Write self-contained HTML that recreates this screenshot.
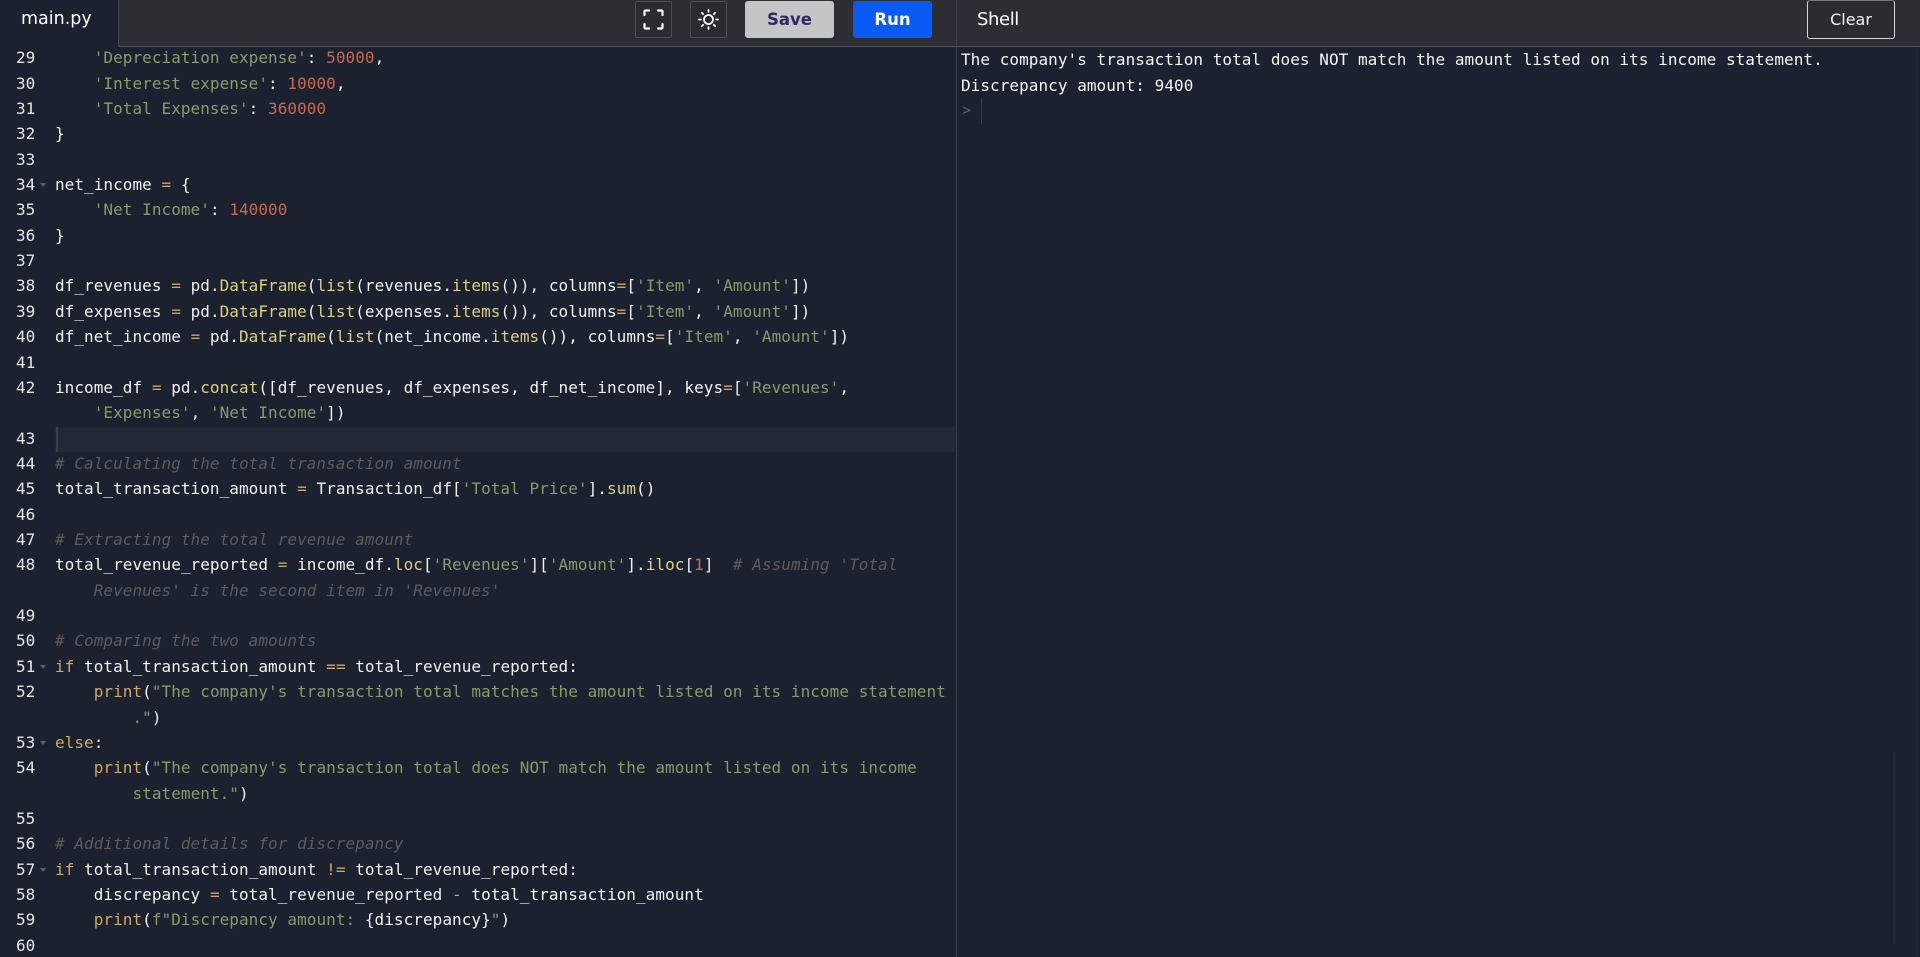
<!DOCTYPE html>
<html><head><meta charset="utf-8"><title>main.py</title>
<style>
html,body{margin:0;padding:0;background:#1b212e;width:1920px;height:957px;overflow:hidden}
*{box-sizing:border-box}
#root{position:absolute;left:0;top:0;width:1920px;height:957px;overflow:hidden;background:#1b212e}
#code{position:absolute;left:0;top:45.2px;width:955px;font:16px/25.36px "DejaVu Sans Mono","Liberation Mono",monospace;letter-spacing:.05px;color:#f2f2f2}
.r{position:relative;height:25.36px;padding-left:55px;white-space:pre}
.n{position:absolute;left:16px;top:0;font-style:normal;color:#e6e6e6;letter-spacing:0}
.fd:after{content:"";position:absolute;left:40px;top:11px;border:3px solid transparent;border-top:4px solid #5a6068;border-bottom:0}
.s{color:#8a9a6c}.d{color:#c9684e}.o{color:#cda869}.k{color:#cda869}.f{color:#dad085}.c{color:#5f5a60;font-style:italic}
#active{position:absolute;left:55px;top:426.500px;width:900px;height:25px;background:#222835}
#cur{position:absolute;left:56px;top:426.500px;width:2px;height:25px;background:#3a414e}
#hdr{position:absolute;left:0;top:0;width:1920px;height:47px;background:#2c2e33;border-bottom:1px solid #55585c}
#tab{position:absolute;left:0;top:0;width:118.5px;height:47px;background:#1b212e;border-right:1px solid #44474c;border-bottom:1px solid #1b212e;color:#fff;font:17.5px/39px "DejaVu Sans",sans-serif;padding-left:21px}
.ib{position:absolute;top:1px;width:37px;height:37px;border:1px solid #4b4e53;border-radius:2px;background:#2a2c30}
.btn{position:absolute;top:1px;height:37px;border-radius:3px;text-align:center;font:bold 16.5px/37px "DejaVu Sans",sans-serif}
#split{position:absolute;left:955.5px;top:0;width:1px;height:957px;background:#3d434e}
#shell{position:absolute;left:977px;top:0;color:#fff;font:18px/39px "DejaVu Sans",sans-serif;letter-spacing:-.4px}
#clear{position:absolute;left:1807px;top:0;width:88px;height:39px;border:1px solid #d8d8d8;border-top-color:#777;border-radius:3px;color:#f0f0f0;text-align:center;font:16px/38px "DejaVu Sans",sans-serif;background:#2a2c30}
#out{position:absolute;left:961px;top:47.2px;font:16px/25.36px "DejaVu Sans Mono","Liberation Mono",monospace;color:#f5f5f5;white-space:pre;letter-spacing:.05px}
#pr{position:absolute;left:962px;top:98px;font:15px/25px "DejaVu Sans Mono",monospace;color:#59606b}
#pl{position:absolute;left:981px;top:98px;width:1px;height:26px;background:#343a46}
#sb{position:absolute;left:1893px;top:752px;width:3px;height:192px;background:#222835}
#sb2{position:absolute;left:1916px;top:47px;width:2px;height:910px;background:#20262f}
</style></head><body>
<div id="root">
<div id="active"></div><div id="cur"></div>
<div id="code">
<div class="r"><i class="n">29</i>    <span class="s">'Depreciation expense'</span>: <span class="d">50000</span>,</div>
<div class="r"><i class="n">30</i>    <span class="s">'Interest expense'</span>: <span class="d">10000</span>,</div>
<div class="r"><i class="n">31</i>    <span class="s">'Total Expenses'</span>: <span class="d">360000</span></div>
<div class="r"><i class="n">32</i>}</div>
<div class="r"><i class="n">33</i></div>
<div class="r fd"><i class="n">34</i>net_income <span class="o">=</span> {</div>
<div class="r"><i class="n">35</i>    <span class="s">'Net Income'</span>: <span class="d">140000</span></div>
<div class="r"><i class="n">36</i>}</div>
<div class="r"><i class="n">37</i></div>
<div class="r"><i class="n">38</i>df_revenues <span class="o">=</span> pd.<span class="f">DataFrame</span>(<span class="f">list</span>(revenues.<span class="f">items</span>()), columns<span class="o">=</span>[<span class="s">'Item'</span>, <span class="s">'Amount'</span>])</div>
<div class="r"><i class="n">39</i>df_expenses <span class="o">=</span> pd.<span class="f">DataFrame</span>(<span class="f">list</span>(expenses.<span class="f">items</span>()), columns<span class="o">=</span>[<span class="s">'Item'</span>, <span class="s">'Amount'</span>])</div>
<div class="r"><i class="n">40</i>df_net_income <span class="o">=</span> pd.<span class="f">DataFrame</span>(<span class="f">list</span>(net_income.<span class="f">items</span>()), columns<span class="o">=</span>[<span class="s">'Item'</span>, <span class="s">'Amount'</span>])</div>
<div class="r"><i class="n">41</i></div>
<div class="r"><i class="n">42</i>income_df <span class="o">=</span> pd.<span class="f">concat</span>([df_revenues, df_expenses, df_net_income], keys<span class="o">=</span>[<span class="s">'Revenues'</span>,</div>
<div class="r">    <span class="s">'Expenses'</span>, <span class="s">'Net Income'</span>])</div>
<div class="r"><i class="n">43</i></div>
<div class="r"><i class="n">44</i><span class="c"># Calculating the total transaction amount</span></div>
<div class="r"><i class="n">45</i>total_transaction_amount <span class="o">=</span> Transaction_df[<span class="s">'Total Price'</span>].<span class="f">sum</span>()</div>
<div class="r"><i class="n">46</i></div>
<div class="r"><i class="n">47</i><span class="c"># Extracting the total revenue amount</span></div>
<div class="r"><i class="n">48</i>total_revenue_reported <span class="o">=</span> income_df.<span class="f">loc</span>[<span class="s">'Revenues'</span>][<span class="s">'Amount'</span>].<span class="f">iloc</span>[<span class="d">1</span>]  <span class="c"># Assuming 'Total</span></div>
<div class="r">    <span class="c">Revenues' is the second item in 'Revenues'</span></div>
<div class="r"><i class="n">49</i></div>
<div class="r"><i class="n">50</i><span class="c"># Comparing the two amounts</span></div>
<div class="r fd"><i class="n">51</i><span class="k">if</span> total_transaction_amount <span class="o">==</span> total_revenue_reported:</div>
<div class="r"><i class="n">52</i>    <span class="k">print</span>(<span class="s">"The company's transaction total matches the amount listed on its income statement</span></div>
<div class="r">        <span class="s">."</span>)</div>
<div class="r fd"><i class="n">53</i><span class="k">else</span>:</div>
<div class="r"><i class="n">54</i>    <span class="k">print</span>(<span class="s">"The company's transaction total does NOT match the amount listed on its income</span></div>
<div class="r">        <span class="s">statement."</span>)</div>
<div class="r"><i class="n">55</i></div>
<div class="r"><i class="n">56</i><span class="c"># Additional details for discrepancy</span></div>
<div class="r fd"><i class="n">57</i><span class="k">if</span> total_transaction_amount <span class="o">!=</span> total_revenue_reported:</div>
<div class="r"><i class="n">58</i>    discrepancy <span class="o">=</span> total_revenue_reported <span class="o">-</span> total_transaction_amount</div>
<div class="r"><i class="n">59</i>    <span class="k">print</span>(<span class="s">f"Discrepancy amount: </span>{discrepancy}<span class="s">"</span>)</div>
<div class="r"><i class="n">60</i></div>
</div>
<div id="hdr"></div>
<div id="tab">main.py</div>
<div class="ib" style="left:635px"><svg width="35" height="35" viewBox="0 0 35 35" fill="none" stroke="#fff" stroke-width="2.2" stroke-linecap="round" stroke-linejoin="round"><path d="M8.500 13V9.500a1 1 0 0 1 1-1H13M22 8.500h3.500a1 1 0 0 1 1 1V13M26.500 22v3.500a1 1 0 0 1-1 1H22M13 26.500H9.500a1 1 0 0 1-1-1V22"/></svg></div>
<div class="ib" style="left:690px"><svg width="35" height="35" viewBox="0 0 35 35" fill="none" stroke="#fff" stroke-width="1.800" stroke-linecap="round"><circle cx="17.500" cy="17.500" r="4.500"/><path d="M17.500 8v1.800M17.500 25.200v1.800M8 17.500h1.800M25.200 17.500h1.800M10.800 10.800l1.300 1.300M22.900 22.900l1.300 1.300M10.800 24.200l1.300-1.300M22.900 12.100l1.300-1.300"/></svg></div>
<div class="btn" style="left:745px;width:89px;background:#c5c5c7;color:#2b2a63">Save</div>
<div class="btn" style="left:853px;width:79px;background:#0a5bf5;color:#fff">Run</div>
<div id="split"></div>
<div id="shell">Shell</div>
<div id="clear">Clear</div>
<div id="out">The company's transaction total does NOT match the amount listed on its income statement.
Discrepancy amount: 9400</div>
<div id="pr">&gt;</div><div id="pl"></div>
<div id="sb"></div><div id="sb2"></div>
</div>
</body></html>
